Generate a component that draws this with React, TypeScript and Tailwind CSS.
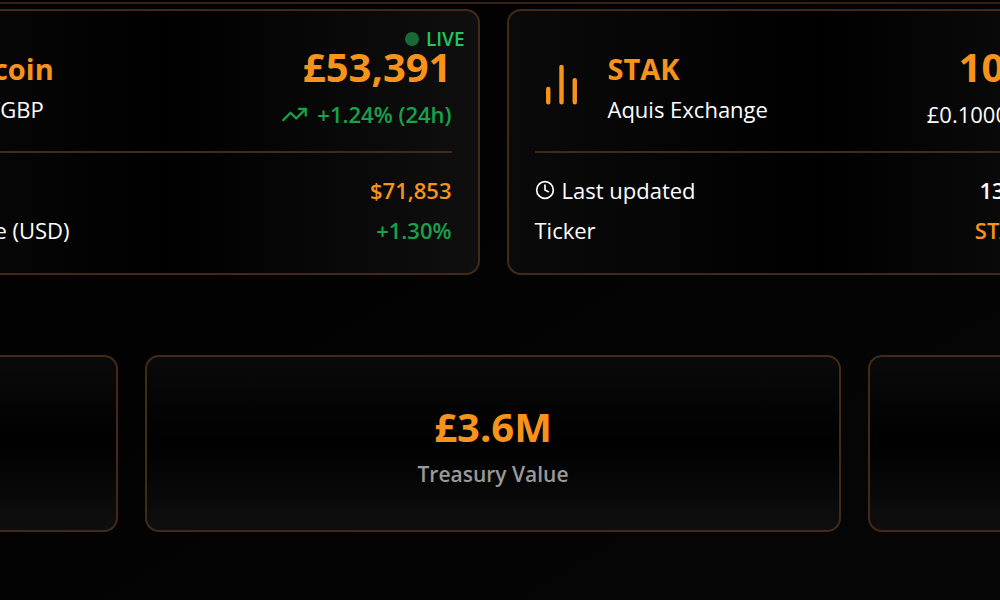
import React from 'react';
import { Bitcoin, Clock, TrendingUp } from 'lucide-react';

interface DetailRow {
  label: string;
  value: string;
  valueClass: string;
  withClock?: boolean;
}

interface MarketCardProps {
  icon: React.ReactNode;
  name: string;
  market: string;
  price: React.ReactNode;
  change: React.ReactNode;
  rows: DetailRow[];
  live?: boolean;
}

const BarsIcon: React.FC<{ className?: string }> = ({ className }) => (
  <svg
    viewBox="0 0 24 24"
    fill="none"
    stroke="currentColor"
    strokeWidth="2"
    strokeLinecap="round"
    aria-hidden="true"
    className={className}
  >
    <path d="M18 20V10M12 20V4M6 20v-6" />
  </svg>
);

const MarketCard: React.FC<MarketCardProps> = ({ icon, name, market, price, change, rows, live }) => (
  <article className="relative rounded-[14px] border-2 border-[#432a18] bg-linear-to-r/srgb from-[#0a0a0a] via-black to-[#0f0f0f] p-[26px]">
    {live && (
      <div className="absolute top-[13px] right-[13px] flex items-center gap-[7px] text-[19px] leading-[30px] font-semibold text-[#22c55e]">
        <span className="h-[14px] w-[14px] rounded-full bg-[#196b36]" />
        LIVE
      </div>
    )}

    <div className="flex items-center justify-between pb-5">
      <div className="flex items-center gap-5">
        {icon}
        <div className="pt-[3px]">
          <h3 className="text-[29px] leading-[46px] font-bold text-[#f7931a]">{name}</h3>
          <p className="text-[22px] leading-[34px]">{market}</p>
        </div>
      </div>
      <div className="text-right">
        <p className="text-[40px] leading-[60px] font-bold text-[#f7931a]">{price}</p>
        <p className="text-[22px] leading-[34px]">{change}</p>
      </div>
    </div>

    <dl className="space-y-[6px] border-t-2 border-[#432a18] pt-5 text-[22px] leading-[34px]">
      {rows.map((row) => (
        <div key={row.label} className="flex items-center justify-between">
          <dt className="flex items-center gap-[7px]">
            {row.withClock && <Clock className="h-5 w-5" />}
            {row.label}
          </dt>
          <dd className={row.valueClass}>{row.value}</dd>
        </div>
      ))}
    </dl>
  </article>
);

const StatCard: React.FC<{ value?: string; label?: string }> = ({ value, label }) => (
  <article className="rounded-[14px] border-2 border-[#432a18] bg-linear-to-b/srgb from-[#0a0a0a] via-black to-[#0f0f0f] px-7 pt-10 pb-[39px] text-center">
    <p className="text-[40px] leading-[60px] font-bold text-[#f7931a]">{value}</p>
    <p className="text-[21px] leading-[34px] font-semibold text-[#999999]">{label}</p>
  </article>
);

const bitcoinRows: DetailRow[] = [
  { label: 'BTC/USD', value: '$71,853', valueClass: 'font-semibold text-[#f7931a]' },
  { label: '24h Change (USD)', value: '+1.30%', valueClass: 'font-semibold text-[#16a34a]' }
];

const stakRows: DetailRow[] = [
  { label: 'Last updated', value: '13 Jun 2026', valueClass: 'font-semibold', withClock: true },
  { label: 'Ticker', value: 'STAK.AQUIS', valueClass: 'font-semibold text-[#f7931a]' }
];

const App: React.FC = () => {
  return (
    <div className="min-h-screen overflow-hidden bg-linear-to-br/srgb from-black to-[#060606] pt-[2px] font-['Open_Sans','Noto_Sans',sans-serif] text-white">
      <header className="border-b-2 border-[#36220f]" />

      <main className="pt-[5px] pr-[14px]">
        <section className="flex justify-center">
          <div className="grid w-[129%] shrink-0 grid-cols-2 gap-[27px]">
            <MarketCard
              icon={<Bitcoin className="h-[47px] w-[47px] text-[#f7931a]" />}
              name="Bitcoin"
              market="BTC/GBP"
              price="£53,391"
              change={
                <span className="flex items-center justify-end gap-[9px] font-semibold text-[#16a34a]">
                  <TrendingUp className="h-[27px] w-[27px]" />
                  +1.24% (24h)
                </span>
              }
              rows={bitcoinRows}
              live
            />
            <MarketCard
              icon={<BarsIcon className="h-[53px] w-[53px] text-[#f7931a]" />}
              name="STAK"
              market="Aquis Exchange"
              price={
                <>
                  10.00<span className="text-[17px] leading-none"> GBX</span>
                </>
              }
              change="£0.1000 (+0.00%)"
              rows={stakRows}
            />
          </div>
        </section>

        <section className="mt-20 flex justify-center">
          <div className="grid w-[217%] shrink-0 grid-cols-3 gap-[27px]">
            <StatCard />
            <StatCard value="£3.6M" label="Treasury Value" />
            <StatCard />
          </div>
        </section>
      </main>
    </div>
  );
};

export default App;
